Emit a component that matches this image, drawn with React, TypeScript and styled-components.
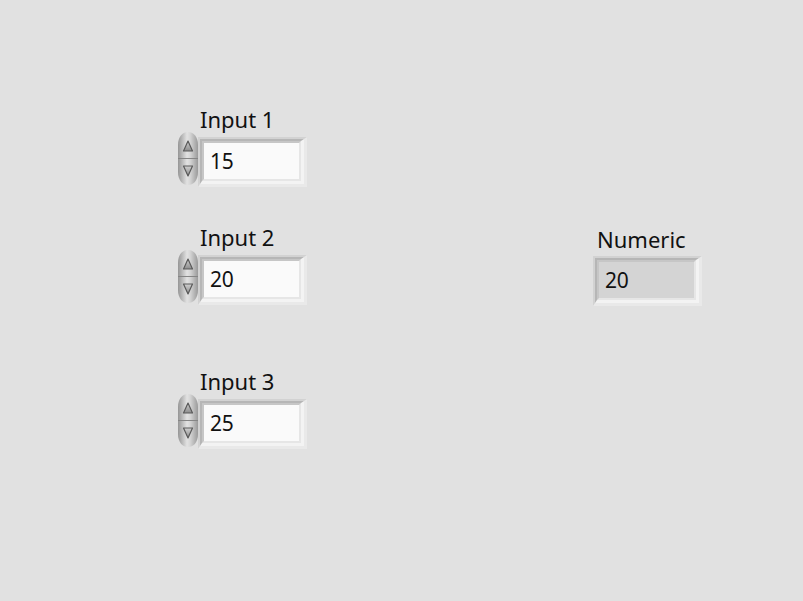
import React from 'react';
import styled, { createGlobalStyle } from 'styled-components';

const GlobalStyle = createGlobalStyle`
  html, body {
    margin: 0;
    padding: 0;
    background: #e1e1e1;
  }
  body {
    font-family: "Noto Sans", "Open Sans", sans-serif;
  }
`;

const Panel = styled.div`
  position: relative;
  width: 803px;
  height: 601px;
  background: #e1e1e1;
  overflow: hidden;
`;

// controls sit on a free canvas, like a front panel
const Control = styled.div<{ $x: number; $y: number }>`
  position: absolute;
  left: ${(p) => p.$x}px;
  top: ${(p) => p.$y}px;
  display: flex;
  flex-direction: column;
`;

const Label = styled.div<{ $indent: number; $gap: number }>`
  font-size: 22px;
  line-height: 24px;
  height: 24px;
  margin-bottom: ${(p) => p.$gap}px;
  color: #111;
  margin-left: ${(p) => p.$indent}px;
  white-space: nowrap;
`;

const Row = styled.div`
  display: flex;
  align-items: flex-start;
`;

const SpinBox = styled.div`
  width: 24px;
  height: 55px;
  margin-right: -2px;
  position: relative;
  z-index: 1;
`;

const Frame = styled.div<{ $indicator?: boolean }>`
  margin-top: ${(p) => (p.$indicator ? 0 : 6)}px;
  width: 109px;
  height: 50px;
  box-sizing: border-box;
  border-style: solid;
  border-width: 2px 3px 3px 2px;
  border-color: #d2d2d2 #e9e9e9 #e9e9e9 #d2d2d2;
  display: flex;
`;

const Bevel = styled.div`
  flex: 1;
  display: flex;
  border-style: solid;
  border-width: 2px 3px 3px 2px;
  border-color: #b6b6b6 #f3f3f3 #f3f3f3 #b6b6b6;
`;

const Field = styled.div<{ $indicator?: boolean }>`
  flex: 1;
  display: flex;
  align-items: center;
  padding-left: 6px;
  border-style: solid;
  border-width: 2px;
  border-color: #c6c6c6 #e6e6e6 #e6e6e6 #c6c6c6;
  background: ${(p) => (p.$indicator ? '#d4d4d4' : '#fafafa')};
  font-size: 21px;
  color: #111;
  letter-spacing: -0.3px;
`;

const Spinner = () => (
  <SpinBox>
    <svg width='24' height='55' viewBox='0 0 24 55'>
      <defs>
        <linearGradient id='spinShade' x1='0' y1='0' x2='1' y2='0'>
          <stop offset='0' stopColor='#959595' />
          <stop offset='0.45' stopColor='#e2e2e2' />
          <stop offset='0.6' stopColor='#d6d6d6' />
          <stop offset='1' stopColor='#9a9a9a' />
        </linearGradient>
        <linearGradient id='arrowShade' x1='0' y1='0' x2='0' y2='1'>
          <stop offset='0' stopColor='#d0d0d0' />
          <stop offset='1' stopColor='#8c8c8c' />
        </linearGradient>
      </defs>
      <path d='M2 27 L2 14 C2 5 7 1 12 1 C17 1 22 5 22 14 L22 27 Z' fill='url(#spinShade)' />
      <path d='M2 28 L2 41 C2 50 7 54 12 54 C17 54 22 50 22 41 L22 28 Z' fill='url(#spinShade)' />
      <line x1='2' y1='27.5' x2='22' y2='27.5' stroke='#858585' strokeWidth='1' />
      <path d='M7.5 20 L12 10 L16.5 20 Z' fill='url(#arrowShade)' stroke='#5a5a5a' strokeWidth='1.2' strokeLinejoin='round' />
      <path d='M7.5 35 L12 45 L16.5 35 Z' fill='url(#arrowShade)' stroke='#5a5a5a' strokeWidth='1.2' strokeLinejoin='round' />
    </svg>
  </SpinBox>
);

type NumProps = { label: string; value: string; x: number; y: number };

const NumericControl = ({ label, value, x, y }: NumProps) => (
  <Control $x={x} $y={y}>
    <Label $indent={24} $gap={0}>{label}</Label>
    <Row>
      <Spinner />
      <Frame>
        <Bevel>
          <Field>{value}</Field>
        </Bevel>
      </Frame>
    </Row>
  </Control>
);

const NumericIndicator = ({ label, value, x, y }: NumProps) => (
  <Control $x={x} $y={y}>
    <Label $indent={4} $gap={5}>{label}</Label>
    <Row>
      <Frame $indicator>
        <Bevel>
          <Field $indicator>{value}</Field>
        </Bevel>
      </Frame>
    </Row>
  </Control>
);

export default function App () {
  return (
    <Panel>
      <GlobalStyle />
      <NumericControl label='Input 1' value='15' x={176} y={107} />
      <NumericControl label='Input 2' value='20' x={176} y={225} />
      <NumericControl label='Input 3' value='25' x={176} y={369} />
      <NumericIndicator label='Numeric' value='20' x={593} y={227} />
    </Panel>
  );
}
